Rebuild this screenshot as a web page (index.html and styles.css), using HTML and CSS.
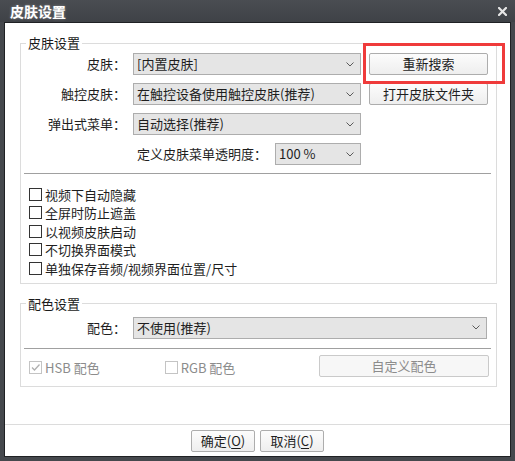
FILE: index.html
```html
<!DOCTYPE html>
<html lang="zh-CN">
<head>
<meta charset="utf-8">
<title>皮肤设置</title>
<link rel="stylesheet" href="styles.css">
</head>
<body>
<div class="window">
  <div class="titlebar">
    <span class="title">皮肤设置</span>
    <svg class="close" width="9" height="9" viewBox="0 0 9 9"><path d="M1 1 L8 8 M8 1 L1 8" stroke="#e6e6e6" stroke-width="2.2" stroke-linecap="square"/></svg>
  </div>
  <div class="client">
    <fieldset class="group group-skin">
      <legend>皮肤设置</legend>
      <div class="rows">
        <div class="label">皮肤：</div>
        <div class="combo"><span>[内置皮肤]</span><svg class="chev" width="8" height="5" viewBox="0 0 8 5"><path d="M0.5 0.5 L4 4 L7.5 0.5" fill="none" stroke="#5a5a5a" stroke-width="1"/></svg></div>
        <div class="btn btn-cell">重新搜索</div>

        <div class="label">触控皮肤：</div>
        <div class="combo"><span>在触控设备使用触控皮肤(推荐)</span><svg class="chev" width="8" height="5" viewBox="0 0 8 5"><path d="M0.5 0.5 L4 4 L7.5 0.5" fill="none" stroke="#5a5a5a" stroke-width="1"/></svg></div>
        <div class="btn btn-cell">打开皮肤文件夹</div>

        <div class="label">弹出式菜单：</div>
        <div class="combo"><span>自动选择(推荐)</span><svg class="chev" width="8" height="5" viewBox="0 0 8 5"><path d="M0.5 0.5 L4 4 L7.5 0.5" fill="none" stroke="#5a5a5a" stroke-width="1"/></svg></div>
        <div></div>

        <div class="opacity-row">
          <span class="label-inline">定义皮肤菜单透明度：</span>
          <div class="combo combo-small"><span>100 %</span><svg class="chev" width="8" height="5" viewBox="0 0 8 5"><path d="M0.5 0.5 L4 4 L7.5 0.5" fill="none" stroke="#5a5a5a" stroke-width="1"/></svg></div>
        </div>
      </div>
      <div class="sep"></div>
      <div class="checks">
        <div class="check"><span class="box"></span><span>视频下自动隐藏</span></div>
        <div class="check"><span class="box"></span><span>全屏时防止遮盖</span></div>
        <div class="check"><span class="box"></span><span>以视频皮肤启动</span></div>
        <div class="check"><span class="box"></span><span>不切换界面模式</span></div>
        <div class="check"><span class="box"></span><span>单独保存音频/视频界面位置/尺寸</span></div>
      </div>
    </fieldset>

    <fieldset class="group group-color">
      <legend>配色设置</legend>
      <div class="rows2">
        <div class="label">配色：</div>
        <div class="combo"><span>不使用(推荐)</span><svg class="chev" width="8" height="5" viewBox="0 0 8 5"><path d="M0.5 0.5 L4 4 L7.5 0.5" fill="none" stroke="#5a5a5a" stroke-width="1"/></svg></div>
      </div>
      <div class="sep sep2"></div>
      <div class="color-row">
        <div class="check disabled hsb"><span class="box box-dis"><svg width="11" height="11" viewBox="0 0 11 11"><path d="M2 5.5 L4.5 8 L9.5 2.5" fill="none" stroke="#b0b0b0" stroke-width="1.3"/></svg></span><span>HSB 配色</span></div>
        <div class="check disabled rgb"><span class="box box-dis"></span><span>RGB 配色</span></div>
        <div class="btn btn-dis custom">自定义配色</div>
      </div>
    </fieldset>

    <div class="spacer"></div>
    <div class="footer">
      <div class="btn fbtn">确定(<u>O</u>)</div>
      <div class="btn fbtn">取消(<u>C</u>)</div>
    </div>
  </div>
  <div class="highlight"></div>
</div>
</body>
</html>
```
FILE: styles.css
```css
* { box-sizing: border-box; }
html, body { margin: 0; padding: 0; background: #45484d; }
body {
  font-family: "Noto Sans CJK SC", "Microsoft YaHei", "Noto Sans", sans-serif;
  font-size: 13px;
  color: #1e1e1e;
}
.window {
  position: relative;
  width: 515px;
  height: 461px;
  background: #45484d;
  display: flex;
  flex-direction: column;
}
.titlebar {
  height: 22px;
  display: flex;
  align-items: center;
  justify-content: space-between;
  padding: 0 8px 0 10px;
  background: linear-gradient(#4a4d52, #3f4247);
}
.title {
  color: #ffffff;
  font-size: 14px;
  font-weight: bold;
  line-height: 22px;
  text-shadow: 0 0 3px rgba(255,255,255,0.35);
}
.close { display: block; margin-top: 1px; }
.client {
  flex: 1;
  margin: 0 4px 4px;
  border: 1px solid #1f2124;
  background: #ffffff;
  display: flex;
  flex-direction: column;
}
.group {
  margin: 12px 13px 0 15px;
  border: 1px solid #dcdcdc;
  padding: 0;
  min-width: 0;
}
.group legend {
  margin-left: 5px;
  padding: 0 2px;
  font-size: 13px;
  line-height: 16px;
  height: 16px;
  color: #1a1a1a;
}
.group-skin { padding: 2px 0 5px; }
.group-color { padding: 5px 0 9px; }
.rows {
  display: grid;
  grid-template-columns: 105px 228px 120px;
  grid-auto-rows: 22px;
  column-gap: 7px;
  row-gap: 8px;
}
.label {
  text-align: right;
  line-height: 22px;
  white-space: nowrap;
}
.combo {
  height: 22px;
  border: 1px solid #adadad;
  background: #e5e5e5;
  display: flex;
  align-items: center;
  justify-content: space-between;
  padding: 0 6px 0 3px;
  line-height: 20px;
  white-space: nowrap;
}
.chev { display: block; flex: none; }
.btn {
  height: 22px;
  border: 1px solid #adadad;
  border-radius: 2px;
  background: linear-gradient(#fcfcfc, #eeeeee);
  display: flex;
  align-items: center;
  justify-content: center;
  line-height: 20px;
  white-space: nowrap;
}
.btn-cell { width: 119px; justify-self: end; }
.opacity-row {
  grid-column: 1 / 3;
  display: flex;
  justify-content: flex-end;
  align-items: center;
  gap: 8px;
}
.label-inline { line-height: 22px; white-space: nowrap; }
.combo-small { width: 86px; }
.sep {
  height: 1px;
  background: #a0a0a0;
  margin: 8px 5px 0 3px;
}
.checks { margin: 11px 0 0 8px; }
.check {
  height: 18.5px;
  display: flex;
  align-items: center;
  gap: 3px;
  white-space: nowrap;
}
.box {
  width: 13px;
  height: 13px;
  border: 1px solid #333333;
  background: #ffffff;
  flex: none;
  display: flex;
  align-items: center;
  justify-content: center;
}
.rows2 {
  display: grid;
  grid-template-columns: 105px 354px;
  column-gap: 7px;
  grid-auto-rows: 22px;
}
.sep2 { margin-top: 9px; }
.color-row {
  display: flex;
  align-items: center;
  height: 22px;
  margin-top: 6px;
}
.disabled { color: #8c8c8c; padding-top: 4px; height: 22px; }
.box-dis { border-color: #c4c4c4; }
.hsb { margin-left: 8px; }
.rgb { margin-left: 65px; }
.custom {
  margin-left: auto;
  margin-right: 7px;
  width: 170px;
  color: #8c8c8c;
  border-color: #cacaca;
  background: #f7f7f7;
}
.spacer { flex: 1; }
.footer {
  border-top: 1px solid #dcdcdc;
  padding: 5px 0 4px;
  display: flex;
  justify-content: center;
  gap: 5px;
}
.fbtn { width: 64px; }
.fbtn u { text-decoration: underline; text-underline-offset: 2px; }
.highlight {
  position: absolute;
  left: 363px;
  top: 43px;
  width: 142px;
  height: 41px;
  border: 3px solid #ef3b3b;
}
```
